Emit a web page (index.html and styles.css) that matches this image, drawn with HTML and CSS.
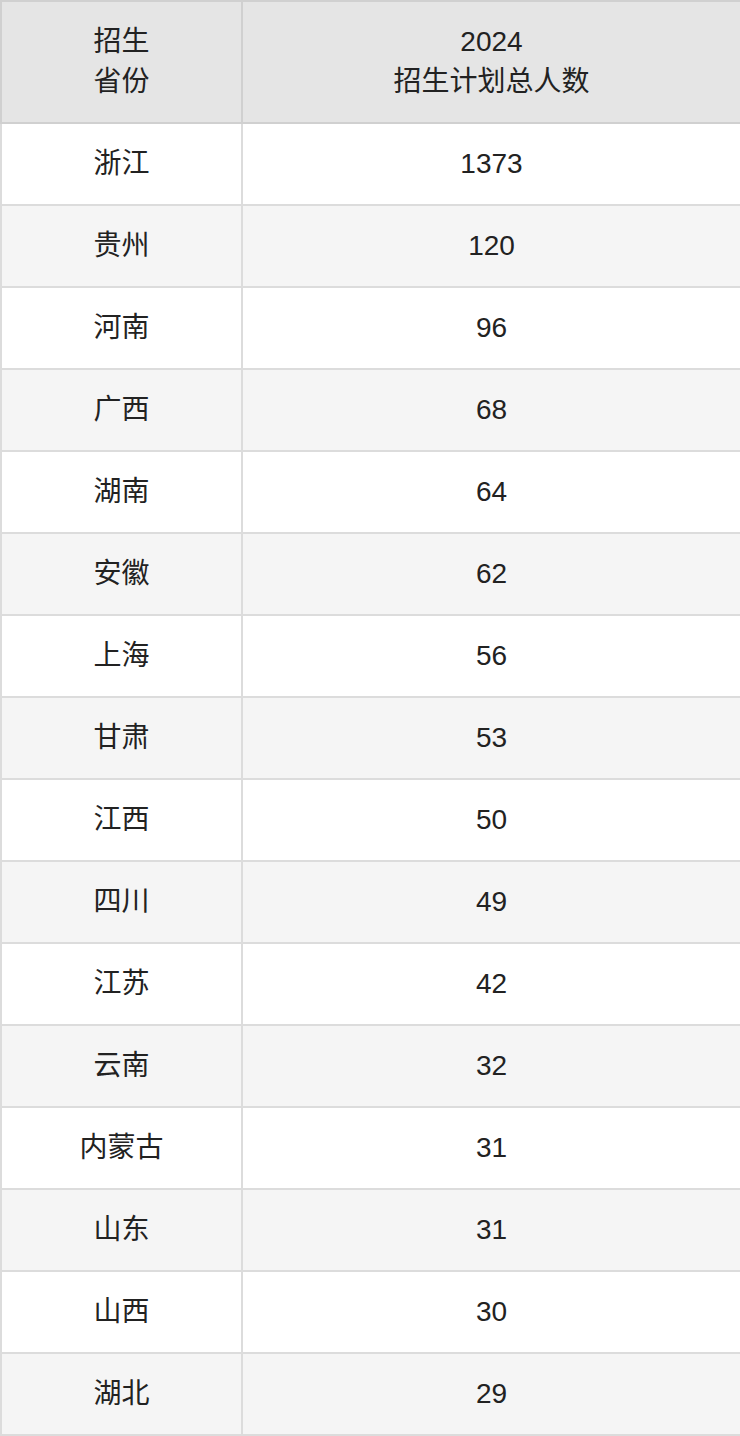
FILE: index.html
```html
<!DOCTYPE html>
<html lang="zh-CN">
<head>
<meta charset="utf-8">
<title>招生计划</title>
<link rel="stylesheet" href="styles.css">
</head>
<body>
<table class="plan">
  <colgroup>
    <col class="col-prov">
    <col class="col-num">
  </colgroup>
  <thead>
    <tr><th>招生<br>省份</th><th>2024<br>招生计划总人数</th></tr>
  </thead>
  <tbody>
    <tr><td>浙江</td><td>1373</td></tr>
    <tr><td>贵州</td><td>120</td></tr>
    <tr><td>河南</td><td>96</td></tr>
    <tr><td>广西</td><td>68</td></tr>
    <tr><td>湖南</td><td>64</td></tr>
    <tr><td>安徽</td><td>62</td></tr>
    <tr><td>上海</td><td>56</td></tr>
    <tr><td>甘肃</td><td>53</td></tr>
    <tr><td>江西</td><td>50</td></tr>
    <tr><td>四川</td><td>49</td></tr>
    <tr><td>江苏</td><td>42</td></tr>
    <tr><td>云南</td><td>32</td></tr>
    <tr><td>内蒙古</td><td>31</td></tr>
    <tr><td>山东</td><td>31</td></tr>
    <tr><td>山西</td><td>30</td></tr>
    <tr><td>湖北</td><td>29</td></tr>
  </tbody>
</table>
</body>
</html>
```
FILE: styles.css
```css
html, body {
  margin: 0;
  padding: 0;
  background: #ffffff;
}
body {
  font-family: "Liberation Sans", Arial, "Noto Sans CJK SC", sans-serif;
  color: #222222;
}
.plan {
  width: 740px;
  border-collapse: collapse;
  table-layout: fixed;
  font-size: 28px;
  line-height: 40px;
}
.col-prov { width: 241px; }
.col-num { width: 499px; }
.plan th,
.plan td {
  padding: 20px 4px;
  text-align: center;
  vertical-align: middle;
  border: 2px solid #dcdcdc;
  font-weight: normal;
}
.plan th {
  background: #e5e5e5;
  border-color: #d0d0d0;
}
.plan tbody tr:nth-child(odd) td { background: #ffffff; }
.plan tbody tr:nth-child(even) td { background: #f5f5f5; }
```
